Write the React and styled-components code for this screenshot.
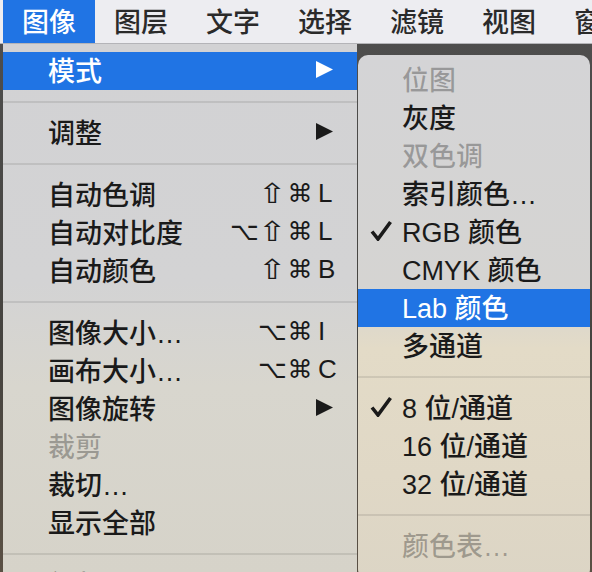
import styled, { createGlobalStyle } from "styled-components";

const GlobalStyle = createGlobalStyle`
  html, body {
    margin: 0;
    padding: 0;
    background: #3e3c39;
    overflow: hidden;
  }
`;

const Screen = styled.div`
  width: 592px;
  height: 572px;
  overflow: hidden;
  display: flex;
  flex-direction: column;
  font-family: "Liberation Sans", "Noto Sans CJK SC", sans-serif;
  font-size: 27px;
  font-weight: 500;
  color: #1a1a1a;
  background: linear-gradient(180deg, #4f4f4f 0%, #45433f 60%, #5a5044 100%);
`;

const MenuBar = styled.div`
  height: 43px;
  flex: none;
  display: flex;
  padding-left: 3px;
  background: #ededf1;
  border-bottom: 1px solid #b4b4b8;
`;

const BarItem = styled.div`
  display: flex;
  align-items: center;
  padding: 0 19px 2px;
  white-space: nowrap;
  color: ${(p) => (p.$active ? "#fff" : "#2a2a2a")};
  background: ${(p) => (p.$active ? "#2074e4" : "transparent")};
`;

const Body = styled.div`
  flex: 1;
  display: flex;
  align-items: flex-start;
  padding-left: 3px;
  min-height: 0;
`;

const Menu = styled.div`
  width: 354px;
  flex: none;
  padding-top: 8px;
  align-self: stretch;
  overflow: hidden;
  background: linear-gradient(
    180deg,
    #d2d2d4 0%,
    #d3d3d4 45%,
    #d8d6ce 65%,
    #d6d3c9 100%
  );
`;

const SubMenu = styled.div`
  width: 232px;
  flex: none;
  margin: 11px 0 0 1px;
  padding: 6px 0 14px;
  border-radius: 10px;
  background: linear-gradient(
    180deg,
    #d4d4d6 0%,
    #d5d4d2 44%,
    #e3dbc7 56%,
    #e0d8c6 80%,
    #dcd5c5 100%
  );
`;

const Item = styled.div`
  box-sizing: border-box;
  height: 38px;
  display: flex;
  align-items: center;
  padding: 0 19px 3px ${(p) => (p.$sub ? "12px" : "45px")};
  white-space: nowrap;
  color: ${(p) =>
    p.$active ? "#fff" : p.$disabled ? "rgba(0, 0, 0, 0.28)" : "#1a1a1a"};
  background: ${(p) => (p.$active ? "#2074e4" : "transparent")};
`;

const Label = styled.span`
  flex: 1;
`;

const Separator = styled.div`
  height: 2px;
  margin: 11px 0;
  background: rgba(0, 0, 0, 0.09);
`;

const Shortcut = styled.span`
  display: flex;
  align-items: center;
`;

const Mod = styled.span`
  width: 28px;
  text-align: center;
  font-family: "DejaVu Sans", sans-serif;
  font-size: 25px;
  font-weight: 400;
  display: inline-block;
  transform: ${(p) => (p.$wide ? "scale(1.35, 1.1)" : "none")};
`;

const Key = styled.span`
  width: 20px;
  margin-left: 4px;
  font-size: 26px;
`;

const ArrowBox = styled.svg`
  width: 17px;
  height: 17px;
  margin-right: 5px;
  fill: ${(p) => (p.$light ? "#fff" : "#1a1a1a")};
`;

const CheckSlot = styled.span`
  width: 32px;
  flex: none;
  display: flex;
  align-items: center;
`;

const CheckMark = styled.svg`
  width: 22px;
  height: 21px;
`;

const Arrow = ({ light }) => (
  <ArrowBox $light={light} viewBox="0 0 17 17">
    <polygon points="0,0 17,8.5 0,17" />
  </ArrowBox>
);

const Check = () => (
  <CheckMark viewBox="0 0 22 21">
    <path
      d="M2 11.5 L8 19 L20.5 2"
      fill="none"
      stroke="#1a1a1a"
      strokeWidth="3.6"
      strokeLinejoin="miter"
    />
  </CheckMark>
);

const barItems = ["图像", "图层", "文字", "选择", "滤镜", "视图", "窗口"];

const mainMenu = [
  { label: "模式", arrow: true, active: true },
  { sep: true },
  { label: "调整", arrow: true },
  { sep: true },
  { label: "自动色调", mods: ["⇧", "⌘"], key: "L" },
  { label: "自动对比度", mods: ["⌥", "⇧", "⌘"], key: "L" },
  { label: "自动颜色", mods: ["⇧", "⌘"], key: "B" },
  { sep: true },
  { label: "图像大小…", mods: ["⌥", "⌘"], key: "I" },
  { label: "画布大小…", mods: ["⌥", "⌘"], key: "C" },
  { label: "图像旋转", arrow: true },
  { label: "裁剪", disabled: true },
  { label: "裁切…" },
  { label: "显示全部" },
  { sep: true },
  { label: "复制…" },
];

const modeMenu = [
  { label: "位图", disabled: true },
  { label: "灰度" },
  { label: "双色调", disabled: true },
  { label: "索引颜色…" },
  { label: "RGB 颜色", checked: true },
  { label: "CMYK 颜色" },
  { label: "Lab 颜色", active: true },
  { label: "多通道" },
  { sep: true },
  { label: "8 位/通道", checked: true },
  { label: "16 位/通道" },
  { label: "32 位/通道" },
  { sep: true },
  { label: "颜色表…", disabled: true },
];

export default function App() {
  return (
    <>
      <GlobalStyle />
      <Screen>
        <MenuBar>
          {barItems.map((t, i) => (
            <BarItem key={t} $active={i === 0}>
              {t}
            </BarItem>
          ))}
        </MenuBar>
        <Body>
          <Menu>
            {mainMenu.map((it, i) =>
              it.sep ? (
                <Separator key={i} />
              ) : (
                <Item key={i} $active={it.active} $disabled={it.disabled}>
                  <Label>{it.label}</Label>
                  {it.mods && (
                    <Shortcut>
                      {it.mods.map((m, j) => (
                        <Mod key={j} $wide={m === "⇧"}>
                          {m}
                        </Mod>
                      ))}
                      <Key>{it.key}</Key>
                    </Shortcut>
                  )}
                  {it.arrow && <Arrow light={it.active} />}
                </Item>
              )
            )}
          </Menu>
          <SubMenu>
            {modeMenu.map((it, i) =>
              it.sep ? (
                <Separator key={i} />
              ) : (
                <Item
                  key={i}
                  $sub
                  $active={it.active}
                  $disabled={it.disabled}
                >
                  <CheckSlot>{it.checked && <Check />}</CheckSlot>
                  <Label>{it.label}</Label>
                </Item>
              )
            )}
          </SubMenu>
        </Body>
      </Screen>
    </>
  );
}
